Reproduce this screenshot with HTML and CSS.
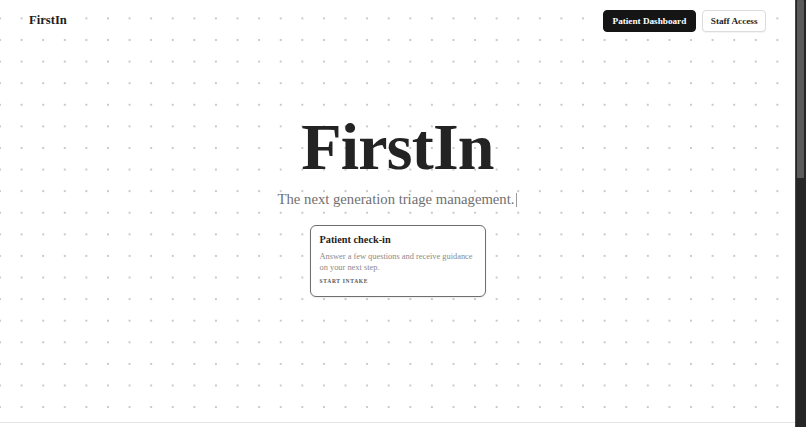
FILE: index.html
```html
<!DOCTYPE html>
<html lang="en">
<head>
<meta charset="utf-8">
<title>FirstIn</title>
<link rel="stylesheet" href="styles.css">
</head>
<body>
<div class="window">
  <div class="page">
    <header class="topbar">
      <div class="logo">FirstIn</div>
      <nav class="actions">
        <a class="btn btn-dark" href="#">Patient Dashboard</a>
        <a class="btn btn-light" href="#">Staff Access</a>
      </nav>
    </header>
    <main class="hero">
      <h1 class="title">FirstIn</h1>
      <p class="tagline">The next generation triage management.<span class="caret"></span></p>
      <a class="card" href="#">
        <div class="card-title">Patient check-in</div>
        <div class="card-text">Answer a few questions and receive guidance on your next step.</div>
        <div class="card-link">START INTAKE</div>
      </a>
    </main>
    <footer class="footer"></footer>
  </div>
  <div class="scrollbar">
    <div class="thumb"></div>
  </div>
</div>
</body>
</html>
```
FILE: styles.css
```css
* { box-sizing: border-box; }
html, body { margin: 0; padding: 0; }
body {
  font-family: "Liberation Serif", "DejaVu Serif", serif;
  color: #222;
  background: #fff;
}
.window {
  width: 806px;
  height: 427px;
  overflow: hidden;
  display: flex;
  flex-direction: row;
}
.page {
  width: 795px;
  flex: none;
  height: 427px;
  overflow: hidden;
  background-color: #fff;
  background-image: radial-gradient(circle, #c9c9c9 0.7px, transparent 1.2px);
  background-size: 21.6px 21.6px;
  background-position: -10.8px 7.6px;
}
.scrollbar {
  width: 11px;
  height: 427px;
  flex: none;
  background-color: #262626;
  border-left: 1px solid #444;
  padding: 0 2px 0 1px;
}
.thumb {
  width: 100%;
  height: 178px;
  background-color: #5a5a5a;
  border-radius: 1px;
}
.topbar {
  height: 42px;
  display: flex;
  align-items: flex-start;
  justify-content: space-between;
  padding: 0 29px 0 29px;
}
.logo {
  font-weight: 700;
  font-size: 12.6px;
  margin-top: 13px;
  color: #1e1e1e;
}
.actions {
  display: flex;
  gap: 6px;
  margin-top: 10px;
}
.btn {
  display: inline-flex;
  align-items: center;
  height: 22px;
  border-radius: 4px;
  font-size: 9.2px;
  font-weight: 700;
  text-decoration: none;
}
.btn-dark {
  background: #151515;
  color: #fff;
  border: 1px solid #151515;
  padding: 0 9px;
}
.btn-light {
  background: #fff;
  color: #1e1e1e;
  border: 1px solid #dcdcdc;
  box-shadow: 0 1px 1px rgba(0,0,0,0.05);
  padding: 0 7.5px;
}
.hero {
  height: 381px;
  border-bottom: 1px solid #e4e4e4;
  display: flex;
  flex-direction: column;
  align-items: center;
}
.title {
  margin: 72px 0 0 0;
  font-size: 66px;
  line-height: 66px;
  font-weight: 700;
  color: #232323;
  letter-spacing: -0.8px;
}
.tagline {
  margin: 11px 0 0 0;
  font-size: 14.7px;
  line-height: 17px;
  color: #707070;
  display: flex;
  align-items: center;
}
.caret {
  display: inline-block;
  width: 1px;
  height: 14px;
  background: #9a9a9a;
  margin-left: 2px;
}
.card {
  margin-top: 17px;
  width: 176px;
  height: 72px;
  border: 1px solid #6e6e6e;
  border-radius: 6px;
  background: #fff;
  padding: 7px 9px 0 9px;
  text-decoration: none;
  display: flex;
  flex-direction: column;
  box-shadow: 0 1px 2px rgba(0,0,0,0.08);
}
.card-title {
  font-size: 10.3px;
  font-weight: 700;
  color: #1e1e1e;
  line-height: 13px;
}
.card-text {
  margin-top: 4.5px;
  font-size: 8.4px;
  line-height: 11px;
  color: #8a8a8a;
}
.card-link {
  margin-top: 5.5px;
  font-size: 5.5px;
  font-weight: 700;
  letter-spacing: 0.7px;
  color: #555;
}
.footer {
  height: 560px;
  background: #fff;
}
```
